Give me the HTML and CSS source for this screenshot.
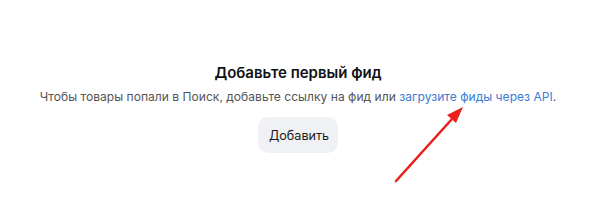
FILE: index.html
```html
<!DOCTYPE html>
<html>
<head>
<meta name="viewport" content="width=device-width, initial-scale=1.0">
<title>Фиды</title>
<link rel="stylesheet" href="styles.css">
</head>
<body>

<div class="empty">
  <h2 class="empty-title">Добавьте первый фид</h2>
  <p class="empty-text">Чтобы товары попали в Поиск, добавьте ссылку на фид или <a href="#" class="link">загрузите фиды через API</a>.</p>
  <button class="button" type="button">Добавить</button>
</div>

<svg class="arrow" width="600" height="212" viewBox="0 0 600 212">
  <line x1="396" y1="181" x2="452" y2="119" stroke="#e8211d" stroke-width="2.6" stroke-linecap="round"/>
  <polygon points="463,107 447,115 456,123" fill="#e8211d"/>
</svg>

</body>
</html>
```

FILE: styles.css
```css
body {
  margin: 0;
  font-family: Inter, "Noto Sans", Arial, sans-serif;
  background: #fff;
  width: 600px;
  height: 212px;
  overflow: hidden;
}

.empty {
  display: flex;
  flex-direction: column;
  align-items: center;
  padding-top: 62px;
  padding-right: 4px;
}

.empty-title {
  margin: 0;
  font-size: 15px;
  font-weight: 600;
  color: #111;
  line-height: 22px;
}

.empty-text {
  margin: 4px 0 0;
  font-size: 12.1px;
  color: #555;
  line-height: 18px;
}

.link {
  color: #3a7bd5;
  text-decoration: none;
}

.button {
  margin-top: 11px;
  background: #eff1f4;
  border: none;
  border-radius: 10px;
  padding: 0 11px;
  width: 80px;
  height: 36px;
  font-family: inherit;
  font-size: 12.6px;
  color: #1a1a1a;
}

/* Arrow drawn on top */
.arrow {
  position: absolute;
  left: 0;
  top: 0;
}
```
